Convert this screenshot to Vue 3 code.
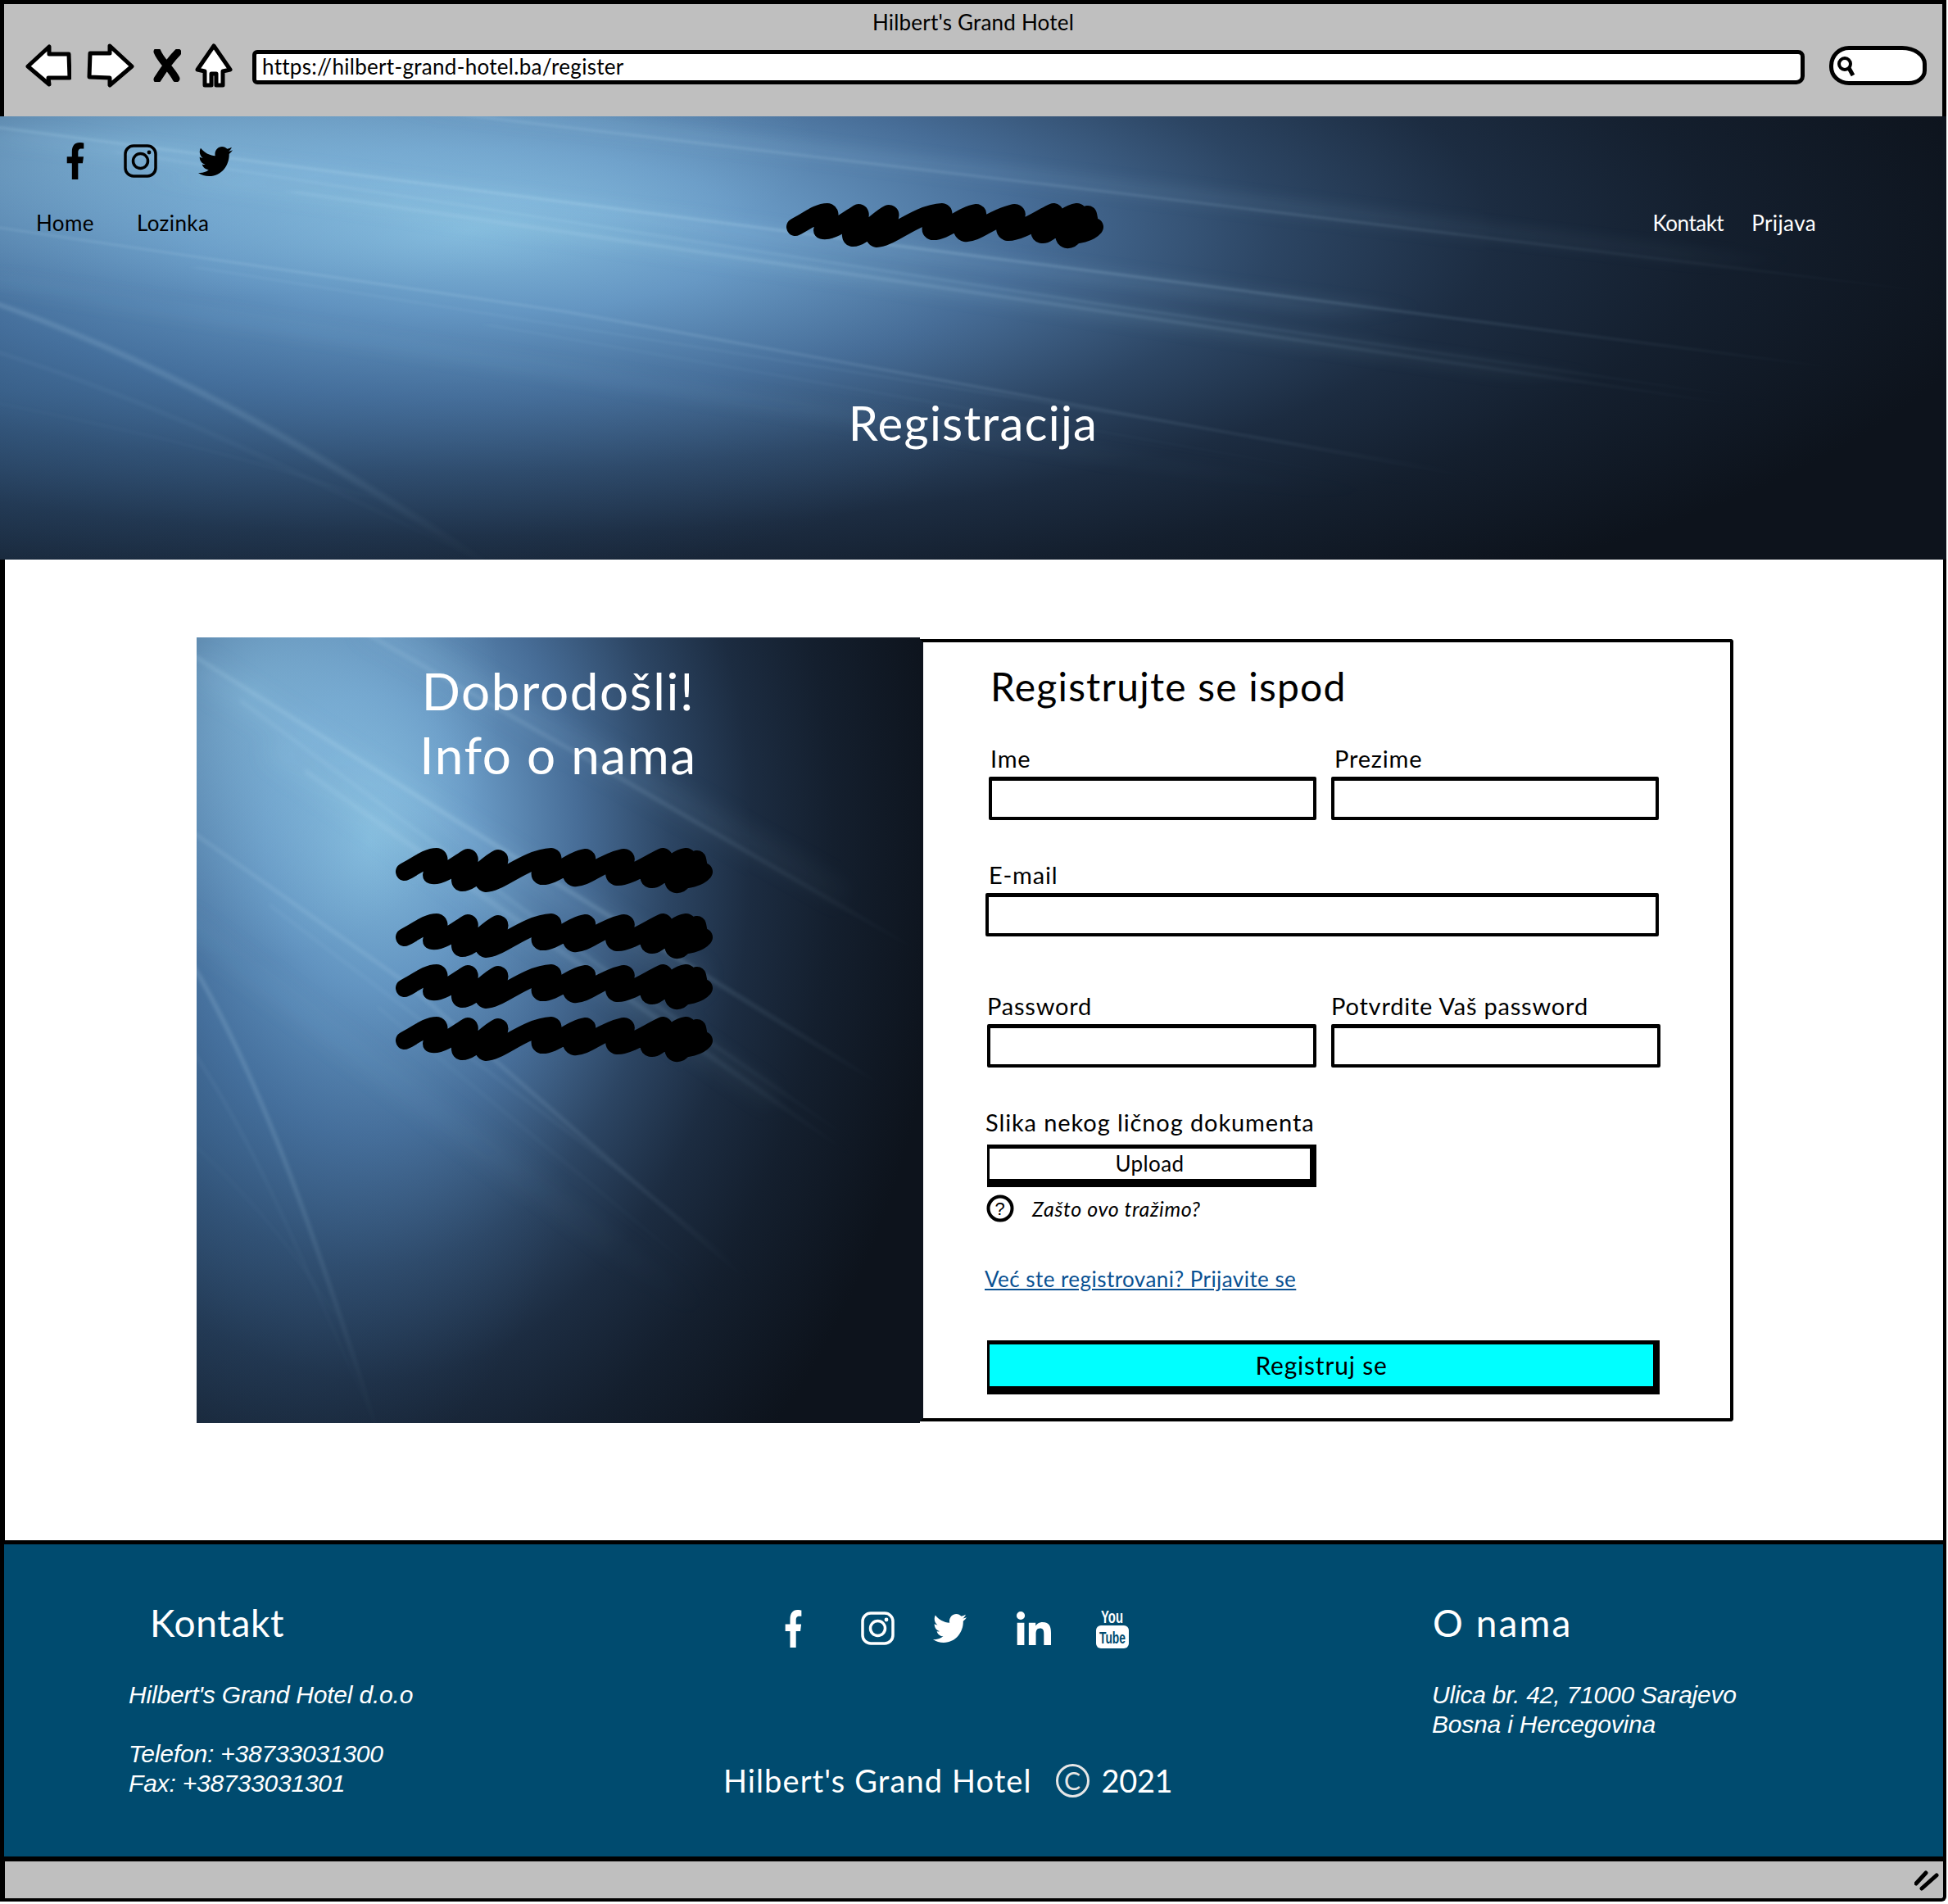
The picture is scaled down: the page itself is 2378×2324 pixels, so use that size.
<script setup>
const artSvg = `<svg xmlns='http://www.w3.org/2000/svg' viewBox='0 0 1000 1000' preserveAspectRatio='none'>
<defs>
<radialGradient id='g' gradientUnits='userSpaceOnUse' cx='240' cy='260' r='800' gradientTransform='translate(240 260) scale(1 1.3) translate(-240 -260)'>
<stop offset='0' stop-color='#88bfe0'/><stop offset='.18' stop-color='#6a9bc6'/><stop offset='.36' stop-color='#476d97'/>
<stop offset='.52' stop-color='#2c4563'/><stop offset='.66' stop-color='#1c2c41'/><stop offset='.8' stop-color='#141f2e'/><stop offset='1' stop-color='#0d131c'/>
</radialGradient>
<radialGradient id='l' gradientUnits='userSpaceOnUse' cx='0' cy='620' r='520'>
<stop offset='0' stop-color='#3f74a8' stop-opacity='.38'/><stop offset='1' stop-color='#3f74a8' stop-opacity='0'/>
</radialGradient>
<radialGradient id='t' gradientUnits='userSpaceOnUse' cx='80' cy='70' r='340'>
<stop offset='0' stop-color='#8cc3e3' stop-opacity='.6'/><stop offset='1' stop-color='#8cc3e3' stop-opacity='0'/>
</radialGradient>
<radialGradient id='f' gradientUnits='userSpaceOnUse' cx='260' cy='260' r='760'>
<stop offset='0' stop-color='#fff'/><stop offset='.55' stop-color='#aaa'/><stop offset='1' stop-color='#000'/>
</radialGradient>
<mask id='m' maskUnits='userSpaceOnUse' x='0' y='0' width='1000' height='1000'><rect width='1000' height='1000' fill='url(#f)'/></mask>
<filter id='b' x='-20%' y='-20%' width='140%' height='140%'><feGaussianBlur stdDeviation='2.5'/></filter>
<filter id='w' x='-20%' y='-20%' width='140%' height='140%'><feGaussianBlur stdDeviation='14'/></filter>
</defs>
<rect width='1000' height='1000' fill='#0d131c'/>
<rect width='1000' height='1000' fill='url(#g)'/>
<rect width='1000' height='1000' fill='url(#l)'/>
<rect width='1000' height='1000' fill='url(#t)'/>
<g mask='url(#m)'>
<g fill='none' filter='url(#w)' stroke='#a9d8ef'>
<path d='M0 40 L700 440' stroke-width='32' stroke-opacity='.14'/>
<path d='M100 140 L800 590' stroke-width='24' stroke-opacity='.16'/>
<path d='M230 -20 L900 330' stroke-width='30' stroke-opacity='.12'/>
<path d='M-20 360 L700 860' stroke-width='26' stroke-opacity='.08'/>
</g>
<g fill='none' filter='url(#b)' stroke='#bfe2f5'>
<path d='M225 -10 L550 160 L1000 400' stroke-width='3' stroke-opacity='.3'/>
<path d='M-10 20 L440 280 L1000 600' stroke-width='4' stroke-opacity='.32'/>
<path d='M-10 245 L290 440 L1000 1010' stroke-width='3' stroke-opacity='.3'/>
<path d='M60 80 L560 420 L1000 700' stroke-width='3' stroke-opacity='.22'/>
<path d='M150 170 L520 410 L1000 720' stroke-width='5' stroke-opacity='.2'/>
<path d='M100 340 L600 690 L900 910' stroke-width='2' stroke-opacity='.2'/>
<path d='M250 470 L760 860 L950 1010' stroke-width='2' stroke-opacity='.14'/>
<path d='M-10 410 C90 560 170 780 250 1010' stroke-width='5' stroke-opacity='.28'/>
<path d='M-10 520 C80 640 150 800 250 1010' stroke-width='2' stroke-opacity='.2'/>
<path d='M-10 640 C60 700 120 760 190 860' stroke-width='2' stroke-opacity='.12'/>
</g>
</g>
</svg>`

const art = { backgroundImage: `url("data:image/svg+xml,${encodeURIComponent(artSvg)}")` }

const scribble = 'M11 29C25 22 38 11 50 11C58 13 44 28 44 33C55 36 75 20 88 12C96 14 74 34 80 42C92 44 110 20 125 13C134 16 100 38 110 43C125 44 160 12 190 11C198 14 170 28 178 34C192 36 215 14 232 12C240 16 205 30 218 36C232 38 250 18 278 12C290 13 258 30 270 35C285 36 310 18 326 11C334 12 300 34 312 38C322 40 335 14 355 11C362 14 330 38 342 44C352 46 362 22 368 14C370 20 368 26 376 29C370 36 355 40 345 38'

const fPath = 'M279.14 288l14.22-92.66h-88.91v-60.13c0-25.35 12.42-50.06 52.24-50.06h40.42V6.26S260.43 0 225.36 0c-73.22 0-121.08 44.38-121.08 124.72v70.62H22.89V288h81.39v224h100.17V288z'
const twPath = 'M459.37 151.716c.325 4.548.325 9.097.325 13.645 0 138.72-105.583 298.558-298.558 298.558-59.452 0-114.68-17.219-161.137-47.106 8.447.974 16.568 1.299 25.34 1.299 49.055 0 94.213-16.568 130.274-44.832-46.132-.975-84.792-31.188-98.112-72.772 6.498.974 12.995 1.624 19.818 1.624 9.421 0 18.843-1.3 27.614-3.573-48.081-9.747-84.143-51.98-84.143-102.985v-1.299c13.969 7.797 30.214 12.67 47.431 13.319-28.264-18.843-46.781-51.005-46.781-87.391 0-19.492 5.197-37.36 14.294-52.954 51.655 63.675 129.3 105.258 216.365 109.807-1.624-7.797-2.599-15.918-2.599-24.04 0-57.828 46.782-104.934 104.934-104.934 30.213 0 57.502 12.67 76.67 33.137 23.715-4.548 46.456-13.32 66.599-25.34-7.798 24.366-24.366 44.833-46.132 57.827 21.117-2.273 41.584-8.122 60.426-16.243-14.292 20.791-32.161 39.308-52.628 54.253z'
const inPath = 'M100.28 448H7.4V148.9h92.88zM53.79 108.1C24.09 108.1 0 83.5 0 53.8a53.79 53.79 0 0 1 107.58 0c0 29.7-24.1 54.3-53.79 54.3zM447.9 448h-92.68V302.4c0-34.7-.7-79.2-48.29-79.2-48.29 0-55.69 37.7-55.69 76.7V448h-92.78V148.9h89.08v40.8h1.3c12.4-23.5 42.69-48.3 87.88-48.3 94 0 111.28 61.9 111.28 142.3V448z'

const aboutLines = [0, 1, 2, 3]
</script>

<template>
  <div class="window">
    <header class="chrome">
      <div class="page-title">Hilbert's Grand Hotel</div>
      <div class="toolbar">
        <svg class="tb-back" width="56" height="52" viewBox="0 0 56 52"><path d="M3 27L29 3L29 12L53 12L54 41L28 41L29 49Z" fill="#fff" stroke="#000" stroke-width="5" stroke-linejoin="round" /></svg>
        <svg class="tb-forward" width="58" height="54" viewBox="0 0 58 54"><path d="M4 12L28 12L28 3L55 28L28 51L28 42L3 41Z" fill="#fff" stroke="#000" stroke-width="5" stroke-linejoin="round" /></svg>
        <svg class="tb-stop" width="34" height="40" viewBox="0 0 34 40"><path d="M5 3C9 14 22 24 28 36M30 4C22 12 12 26 5 37" fill="none" stroke="#000" stroke-width="9" stroke-linecap="round" /></svg>
        <svg class="tb-home" width="48" height="56" viewBox="0 0 48 56"><path d="M24 4L44 33L35 35L35 52L27 52L27 38L21 38L21 52L13 52L13 35L4 33Z" fill="#fff" stroke="#000" stroke-width="5" stroke-linejoin="round" /></svg>
        <div class="url">https://hilbert-grand-hotel.ba/register</div>
        <div class="search">
          <svg width="28" height="28" viewBox="0 0 28 28"><circle cx="11" cy="12" r="7" fill="none" stroke="#000" stroke-width="4" /><path d="M16 17L21 26" stroke="#000" stroke-width="5" /></svg>
        </div>
      </div>
    </header>

    <section class="hero" :style="art">
      <div class="hero-social">
        <svg width="24" height="45" viewBox="0 0 320 512" preserveAspectRatio="none"><path :d="fPath" /></svg>
        <svg width="41" height="41" viewBox="0 0 41 41"><rect x="2" y="2" width="37" height="37" rx="10" fill="none" stroke="#000" stroke-width="3.5" /><circle cx="20.5" cy="20.5" r="9" fill="none" stroke="#000" stroke-width="3.5" /><circle cx="31" cy="10" r="2.4" /></svg>
        <svg width="42" height="36" viewBox="0 48 512 416" preserveAspectRatio="none"><path :d="twPath" /></svg>
      </div>
      <nav class="hero-nav">
        <div class="nav-left"><a>Home</a><a>Lozinka</a></div>
        <svg class="scribble" viewBox="0 0 388 54"><path :d="scribble" /></svg>
        <div class="nav-right"><a>Kontakt</a><a>Prijava</a></div>
      </nav>
      <h1>Registracija</h1>
    </section>

    <main class="content">
      <div class="card">
        <aside class="welcome" :style="art">
          <h2>Dobrodošli!<br />Info o nama</h2>
          <div class="about-lines">
            <svg v-for="n in aboutLines" :key="n" class="scribble" viewBox="0 0 388 54"><path :d="scribble" /></svg>
          </div>
        </aside>

        <form class="panel" @submit.prevent>
          <h3>Registrujte se ispod</h3>
          <div class="row row-name">
            <label class="field"><span class="lbl-a">Ime</span><input type="text" /></label>
            <label class="field"><span class="lbl-b">Prezime</span><input type="text" /></label>
          </div>
          <label class="field row-mail"><span class="lbl-b">E-mail</span><input type="text" /></label>
          <div class="row row-pass">
            <label class="field"><span>Password</span><input type="password" /></label>
            <label class="field"><span>Potvrdite Vaš password</span><input type="password" /></label>
          </div>
          <div class="doc-label">Slika nekog ličnog dokumenta</div>
          <button class="btn btn-upload" type="button">Upload</button>
          <div class="why">
            <svg width="34" height="34" viewBox="0 0 34 34">
              <circle cx="17" cy="17" r="14.5" fill="none" stroke="#000" stroke-width="4" />
              <text x="17" y="25" text-anchor="middle" class="why-q">?</text>
            </svg>
            <em>Zašto ovo tražimo?</em>
          </div>
          <a class="login-link">Već ste registrovani? Prijavite se</a>
          <button class="btn btn-submit" type="submit">Registruj se</button>
        </form>
      </div>
    </main>

    <footer class="footer">
      <div class="foot-col">
        <h4 class="foot-contact">Kontakt</h4>
        <p>Hilbert's Grand Hotel d.o.o</p>
        <p class="spaced">Telefon: +38733031300<br />Fax: +38733031301</p>
      </div>
      <div class="foot-mid">
        <div class="foot-social">
          <svg width="23" height="46" viewBox="0 0 320 512" preserveAspectRatio="none"><path :d="fPath" /></svg>
          <svg width="41" height="41" viewBox="0 0 41 41"><rect x="2" y="2" width="37" height="37" rx="10" fill="none" stroke="#fff" stroke-width="3.5" /><circle cx="20.5" cy="20.5" r="9" fill="none" stroke="#fff" stroke-width="3.5" /><circle cx="31" cy="10" r="2.4" /></svg>
          <svg width="41" height="35" viewBox="0 48 512 416" preserveAspectRatio="none"><path :d="twPath" /></svg>
          <svg width="42" height="41" viewBox="0 0 448 448" preserveAspectRatio="none"><path :d="inPath" /></svg>
          <svg class="yt" width="40" height="49" viewBox="0 0 40 49">
            <text x="6" y="18" textLength="27" lengthAdjust="spacingAndGlyphs" class="yt-you">You</text>
            <rect y="21" width="40" height="28" rx="6" />
            <text x="4" y="43" textLength="32" lengthAdjust="spacingAndGlyphs" class="yt-tube">Tube</text>
          </svg>
        </div>
        <div class="foot-line">
          <span>Hilbert's Grand Hotel</span>
          <span class="copy">C</span>
          <span class="foot-year">2021</span>
        </div>
      </div>
      <div class="foot-col">
        <h4 class="foot-about">O nama</h4>
        <p>Ulica br. 42, 71000 Sarajevo<br />Bosna i Hercegovina</p>
      </div>
    </footer>

    <div class="statusbar">
      <svg width="30" height="26" viewBox="0 0 30 26"><path d="M2 17L14 4M9 23L27 7" fill="none" stroke="#000" stroke-width="5" stroke-linecap="round" /></svg>
    </div>
  </div>
</template>

<style>
body { background: #fff; }
</style>

<style scoped>
.window {
  width: 2376px;
  height: 2321px;
  display: flex;
  flex-direction: column;
  font-family: Lato, "Open Sans", sans-serif;
  color: #000;
}

.chrome {
  height: 142px;
  box-sizing: border-box;
  flex: none;
  background: #bfbfbf;
  border: 5px solid #000;
  border-bottom: 0;
}
.page-title { text-align: center; font-size: 26px; line-height: 44px; letter-spacing: 0.2px; }
.toolbar { display: flex; align-items: center; padding-left: 26px; margin-top: 1px; height: 60px; }
.tb-forward { margin-left: 19px; }
.tb-stop { margin-left: 23px; }
.tb-home { margin-left: 16px; }
.url {
  width: 1895px;
  height: 42px;
  box-sizing: border-box;
  margin-left: 23px;
  margin-top: 4px;
  padding-left: 7px;
  background: #fff;
  border: 5px solid #000;
  border-radius: 6px 8px 10px 6px;
  font-size: 26px;
  line-height: 30px;
  letter-spacing: 0.3px;
}
.search {
  width: 119px;
  height: 48px;
  box-sizing: border-box;
  margin-left: 30px;
  display: flex;
  align-items: center;
  padding-left: 3px;
  background: #fff;
  border: 5px solid #000;
  border-radius: 24px 30px 22px 24px / 24px 22px 18px 22px;
}

.hero {
  height: 541px;
  box-sizing: border-box;
  flex: none;
  padding-top: 32px;
  background-size: 100% 100%;
}
.hero-social {
  display: grid;
  grid-template-columns: 71px 91px 42px;
  align-items: center;
  padding-left: 80px;
  height: 45px;
}
.hero-social svg { display: block; }
.hero-nav {
  display: grid;
  grid-template-columns: 960px 388px 1fr;
  align-items: center;
  margin-top: 29px;
  font-size: 26px;
}
.nav-left { display: flex; gap: 52px; padding: 0 0 6px 44px; }
.nav-right { display: flex; gap: 34px; justify-content: flex-end; padding: 0 159px 6px 0; color: #fff; }
.hero-nav a { letter-spacing: 0.4px; }
.nav-right a:first-child { letter-spacing: -0.5px; }
.scribble { display: block; width: 388px; height: 54px; overflow: visible; }
.scribble path { fill: none; stroke: #000; stroke-width: 22; stroke-linecap: round; stroke-linejoin: round; }
.hero h1 {
  margin: 180px 0 0;
  text-align: center;
  color: #fff;
  font-weight: 400;
  font-size: 58px;
  line-height: 68px;
  letter-spacing: 1.3px;
}

.content {
  height: 1197px;
  box-sizing: border-box;
  flex: none;
  padding: 95px 0 0 234px;
  background: #fff;
  border-left: 6px solid #000;
  border-right: 4px solid #000;
}
.card { display: grid; grid-template-columns: 883px 993px; width: 1876px; height: 959px; }
.welcome {
  background-size: 100% 100%;
  text-align: center;
  display: flex;
  flex-direction: column;
  align-items: center;
}
.welcome h2 {
  margin: 26px 0 0;
  color: #fff;
  font-weight: 400;
  font-size: 62px;
  line-height: 78px;
  letter-spacing: 1.6px;
}
.about-lines { margin: 75px 0 0 -10px; display: flex; flex-direction: column; }
.about-lines .scribble:nth-child(2) { margin-top: 26px; }
.about-lines .scribble:nth-child(3) { margin-top: 8px; }
.about-lines .scribble:nth-child(4) { margin-top: 10px; }

.panel {
  margin: 2px 0;
  box-sizing: border-box;
  height: 955px;
  padding: 26px 0 0 78px;
  background: #fff;
  border: 4px solid #000;
  border-left-color: #0d131c;
  border-radius: 0 4px 4px 0;
  display: flex;
  flex-direction: column;
  align-items: flex-start;
}
.panel h3 {
  margin: 0 0 0 4px;
  font-weight: 400;
  font-size: 48px;
  line-height: 56px;
  letter-spacing: 1.2px;
}
.row { display: grid; grid-template-columns: 1fr 1fr; column-gap: 18px; }
.field { display: block; }
.field span { display: block; font-size: 29px; line-height: 36px; letter-spacing: 0.8px; }
.field .lbl-a { padding-left: 2px; }
.field .lbl-b { padding-left: 4px; }
.field input {
  display: block;
  width: 100%;
  height: 53px;
  box-sizing: border-box;
  margin-top: 4px;
  background: #fff;
  border: 4px solid #000;
  border-top-width: 5px;
  border-radius: 2px;
  outline: none;
}
.row-name { width: 818px; margin: 42px 0 0 2px; }
.row-mail { width: 822px; margin: 49px 0 0 -2px; }
.row-pass { width: 822px; margin-top: 67px; }
.doc-label { margin: 49px 0 0 -2px; font-size: 29px; line-height: 36px; letter-spacing: 0.9px; }
.btn {
  display: block;
  box-sizing: border-box;
  background: #fff;
  color: #000;
  font-family: inherit;
  padding: 0;
  border-style: solid;
  border-color: #000;
  border-width: 5px 8px 10px 3px;
}
.btn-upload { width: 402px; height: 52px; margin-top: 9px; padding-bottom: 2px; font-size: 26px; letter-spacing: 0.4px; }
.why { display: flex; align-items: center; gap: 22px; height: 34px; margin: 9px 0 0 -1px; font-size: 25px; letter-spacing: 0.6px; }
.why-q { font-family: "Liberation Sans", sans-serif; font-size: 22px; font-weight: 400; }
.login-link {
  margin: 53px 0 0 -3px;
  color: #0a5192;
  font-size: 26px;
  line-height: 32px;
  letter-spacing: 0.45px;
  text-decoration: underline;
}
.btn-submit { width: 821px; height: 66px; margin-top: 59px; padding-bottom: 1px; background: #0ff; font-size: 30px; letter-spacing: 0.8px; }

.footer {
  height: 392px;
  box-sizing: border-box;
  flex: none;
  display: grid;
  grid-template-columns: 725px 866px 1fr;
  padding-left: 153px;
  background: #004b6f;
  color: #fff;
  border: 5px solid #000;
  border-bottom-width: 6px;
  border-right-width: 4px;
}
.foot-col { padding-top: 68px; }
.foot-col h4 { margin: 0; font-weight: 400; font-size: 46px; line-height: 56px; letter-spacing: 0.7px; }
.foot-col .foot-contact { padding-left: 25px; }
.foot-col .foot-about { letter-spacing: 2.1px; }
.foot-col p {
  margin: 42px 0 0 -1px;
  font-family: "Liberation Sans", sans-serif;
  font-style: italic;
  font-size: 30px;
  line-height: 36px;
  letter-spacing: -0.2px;
}
.foot-col p.spaced { margin-top: 36px; }
.foot-mid { padding-top: 78px; }
.foot-social {
  display: grid;
  grid-template-columns: 94px 88px 102px 97px 40px;
  align-items: center;
  padding-left: 74px;
  height: 49px;
  fill: #fff;
}
.foot-social svg { display: block; }
.foot-social .yt { overflow: visible; }
.yt-you { font-family: "Liberation Sans", sans-serif; font-weight: 700; font-size: 22px; fill: #fff; }
.yt-tube { font-family: "Liberation Sans", sans-serif; font-weight: 700; font-size: 21px; fill: #004b6f; }
.foot-line {
  display: flex;
  align-items: center;
  margin-top: 138px;
  height: 46px;
  font-size: 38px;
  letter-spacing: 1.1px;
}
.foot-year { letter-spacing: -0.4px; }
.copy {
  width: 41px;
  height: 41px;
  box-sizing: border-box;
  margin: 0 15px 0 29px;
  border: 3px solid #e6e6e6;
  border-radius: 50%;
  display: flex;
  align-items: center;
  justify-content: center;
  font-size: 30px;
  letter-spacing: 0;
  color: #e6e6e6;
}

.statusbar {
  flex: 1;
  display: flex;
  align-items: center;
  justify-content: flex-end;
  padding-right: 5px;
  background: #bfbfbf;
  border: 4px solid #000;
  border-top: 0;
  border-left-width: 6px;
  border-bottom-right-radius: 6px;
}
</style>
